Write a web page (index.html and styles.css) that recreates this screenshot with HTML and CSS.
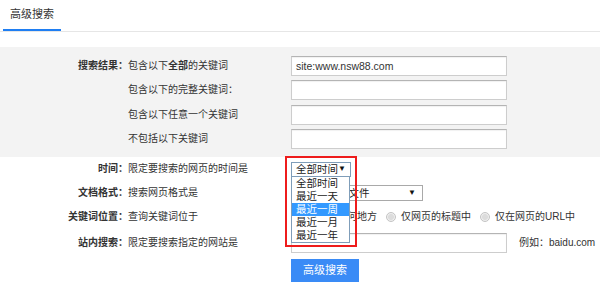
FILE: index.html
```html
<!DOCTYPE html>
<html lang="zh-CN">
<head>
<meta charset="utf-8">
<title>高级搜索</title>
<link rel="stylesheet" href="styles.css">
</head>
<body>
<div class="header">
  <div class="tab">高级搜索</div>
</div>

<div class="gray">
  <div class="row">
    <div class="label">搜索结果：</div>
    <div class="desc">包含以下<b>全部</b>的关键词</div>
    <div class="ctrl"><div class="input">site:www.nsw88.com</div></div>
  </div>
  <div class="row">
    <div class="label"></div>
    <div class="desc">包含以下的完整关键词：</div>
    <div class="ctrl"><div class="input"></div></div>
  </div>
  <div class="row">
    <div class="label"></div>
    <div class="desc">包含以下任意一个关键词</div>
    <div class="ctrl"><div class="input"></div></div>
  </div>
  <div class="row">
    <div class="label"></div>
    <div class="desc">不包括以下关键词</div>
    <div class="ctrl"><div class="input"></div></div>
  </div>
</div>

<div class="opts">
  <div class="row r1">
    <div class="label">时间：</div>
    <div class="desc">限定要搜索的网页的时间是</div>
    <div class="ctrl">
      <div class="time-wrap">
        <div class="select sel-time"><span>全部时间</span><span class="arrow">▼</span></div>
        <div class="listbox">
          <div class="opt">全部时间</div>
          <div class="opt">最近一天</div>
          <div class="opt active">最近一周</div>
          <div class="opt">最近一月</div>
          <div class="opt">最近一年</div>
        </div>
        <div class="redbox"></div>
      </div>
    </div>
  </div>
  <div class="row r2">
    <div class="label">文档格式：</div>
    <div class="desc">搜索网页格式是</div>
    <div class="ctrl">
      <div class="select sel-fmt"><span>所有网页和文件</span><span class="arrow">▼</span></div>
    </div>
  </div>
  <div class="row r3">
    <div class="label">关键词位置：</div>
    <div class="desc">查询关键词位于</div>
    <div class="ctrl radios">
      <span class="radio checked"></span><span class="rtext">网页的任何地方</span>
      <span class="radio"></span><span class="rtext">仅网页的标题中</span>
      <span class="radio"></span><span class="rtext">仅在网页的URL中</span>
    </div>
  </div>
  <div class="row r4">
    <div class="label">站内搜索：</div>
    <div class="desc">限定要搜索指定的网站是</div>
    <div class="ctrl">
      <div class="input"></div>
      <span class="example">例如：baidu.com</span>
    </div>
  </div>
  <div class="row r5">
    <div class="label"></div>
    <div class="desc"></div>
    <div class="ctrl"><div class="btn">高级搜索</div></div>
  </div>
</div>
</body>
</html>
```

FILE: styles.css
```css
* { box-sizing: border-box; }
body {
  margin: 0;
  background: #fff;
  color: #333;
  font-family: "Liberation Sans", "Noto Sans CJK SC", sans-serif;
  font-size: 10px;
  overflow: hidden;
}
.header {
  height: 32px;
  border-bottom: 1px solid #e6e6e6;
  display: flex;
}
.tab {
  margin-left: 3px;
  width: 58px;
  height: 31px;
  border-bottom: 2px solid #1f7ef2;
  text-align: center;
  line-height: 29px;
  font-size: 11px;
  color: #333;
}
.gray {
  margin-top: 15px;
  background: #f3f3f3;
  padding: 9px 0 8px;
  display: flex;
  flex-direction: column;
  gap: 4.33px;
}
.row {
  display: grid;
  grid-template-columns: 128px 163px 1fr;
  align-items: center;
}
.label {
  text-align: right;
  font-weight: bold;
  color: #333;
  line-height: 14px;
}
.desc {
  line-height: 14px;
  white-space: nowrap;
}
.desc b { font-weight: bold; }
.ctrl {
  display: flex;
  align-items: center;
}
.input {
  width: 216px;
  height: 20px;
  background: #fff;
  border: 1px solid #cdcdcd;
  border-top-color: #b4b4b4;
  box-shadow: inset 0 1px 1px rgba(0,0,0,0.06);
  font-size: 10.5px;
  line-height: 18px;
  padding-left: 4px;
  color: #333;
}
.opts .row { height: 24px; }
.opts .r1 { height: 24px; }
.opts .r3 { height: 25px; }
.opts .r4 { height: 26px; }
.opts .r5 { height: 23px; margin-top: 3px; }

.time-wrap { position: relative; }
.select {
  height: 16px;
  background: #fff;
  display: flex;
  align-items: center;
  justify-content: space-between;
  padding: 0 4px 0 4px;
  line-height: 14px;
  font-size: 10.5px;
  color: #222;
}
.arrow { font-size: 8px; color: #111; }
.sel-time {
  width: 60px;
  height: 15px;
  border: 1px solid #7f9db9;
  margin-top: 1px;
}
.sel-fmt {
  width: 132px;
  border: 1px solid #a9a9a9;
  padding-right: 6px;
}
.listbox {
  position: absolute;
  left: 0;
  top: 15px;
  width: 59px;
  background: #fff;
  border: 1px solid #7f9db9;
  z-index: 2;
  padding: 0;
}
.opt {
  height: 13px;
  line-height: 13px;
  padding-left: 4px;
  font-size: 10.5px;
  color: #222;
}
.opt.active { background: #3399ff; color: #fff; }
.redbox {
  position: absolute;
  left: -6px;
  top: -5px;
  width: 72px;
  height: 91px;
  border: 2px solid #ee1c1c;
  z-index: 3;
}
.radios { white-space: nowrap; }
.radio {
  display: inline-block;
  width: 10px;
  height: 10px;
  border-radius: 50%;
  border: 1px solid #c4c4c4;
  background: radial-gradient(circle, #dcdcdc 0 45%, #eeeeee 60%);
  margin: 0 5px 0 1px;
  flex: none;
}
.rtext { margin-right: 8px; line-height: 14px; }
.example { margin-left: 12px; line-height: 14px; }
.btn {
  width: 68px;
  height: 23px;
  background: #3a8bf6;
  color: #fff;
  text-align: center;
  line-height: 23px;
  font-size: 11px;
}
```
